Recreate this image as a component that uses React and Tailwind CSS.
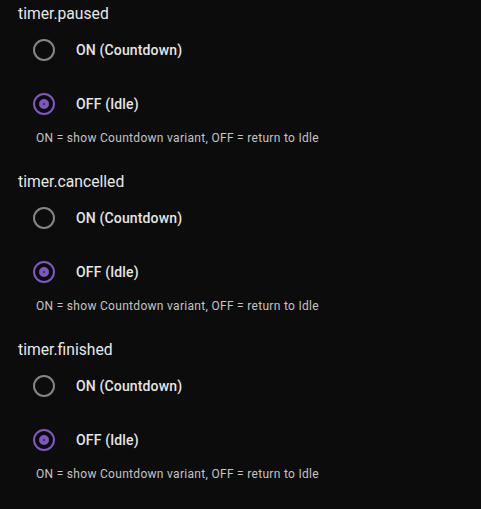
import React from 'react';

const sections = ['timer.paused', 'timer.cancelled', 'timer.finished'];

const Radio = ({ checked, label }) => (
  <div className="flex items-center h-12 pl-[15px]">
    {checked ? (
      <span className="w-[22px] h-[22px] rounded-full border-2 border-[#7e57c2] flex items-center justify-center shrink-0">
        <span className="w-[10px] h-[10px] rounded-full bg-[#7e57c2] flex items-center justify-center">
          <span className="w-[2px] h-[2px] rounded-full bg-[#2a1f3d]" />
        </span>
      </span>
    ) : (
      <span className="w-[22px] h-[22px] rounded-full border-2 border-[#858585] shrink-0" />
    )}
    <span className="ml-[21px] text-[14px] font-medium tracking-[0.15px] text-[#e6e6e6]">{label}</span>
  </div>
);

const Section = ({ name }) => (
  <div className="mb-[26px]">
    <div className="h-5 leading-5 text-[15.7px] text-[#e8e8e8]">{name}</div>
    <div className="mt-[2px] flex flex-col gap-[6px]">
      <Radio label="ON (Countdown)" />
      <Radio checked label="OFF (Idle)" />
    </div>
    <div className="mt-[2px] pl-[18px] h-4 leading-4 text-[12px] tracking-[0.3px] text-[#c4c4c4]">
      ON = show Countdown variant, OFF = return to Idle
    </div>
  </div>
);

export default function App() {
  return (
    <div className="min-h-screen bg-[#0c0c0c] pt-1 px-[18px] font-['Roboto',sans-serif]">
      {sections.map((s) => (
        <Section key={s} name={s} />
      ))}
    </div>
  );
}
